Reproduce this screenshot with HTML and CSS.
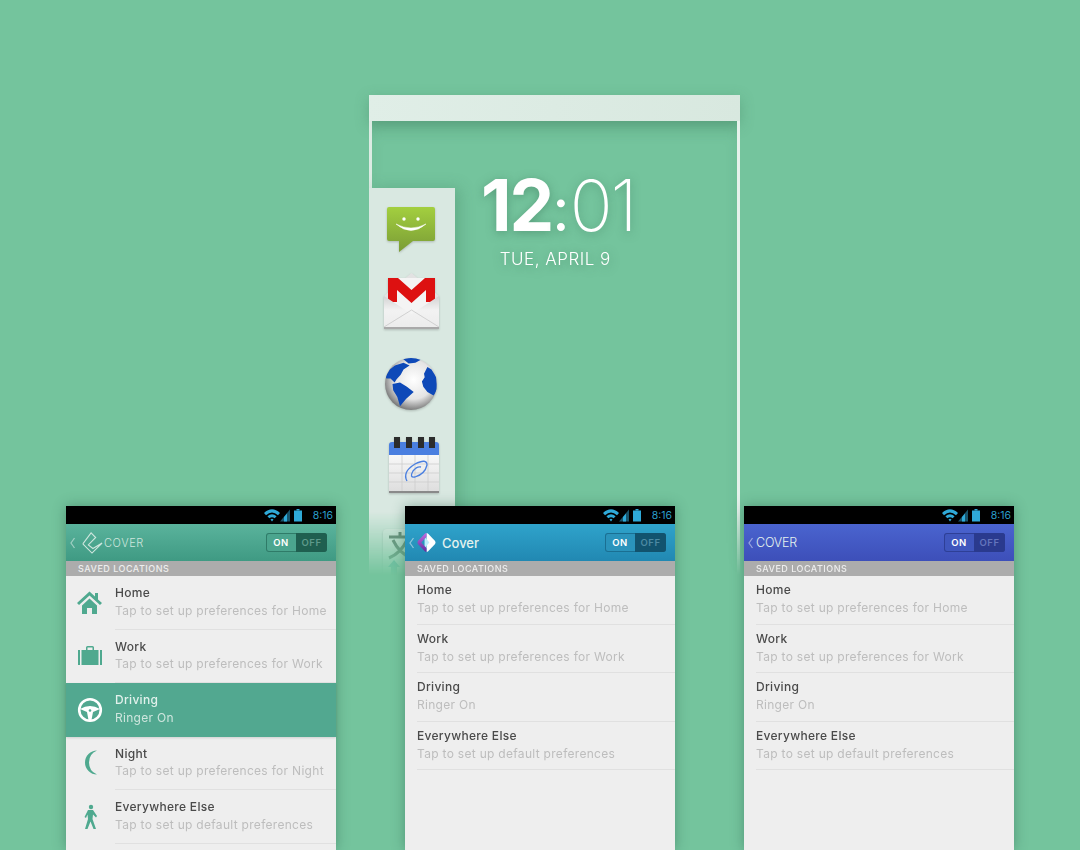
FILE: index.html
```html
<!DOCTYPE html>
<html lang="en">
<head>
  <meta charset="UTF-8">
  <title>Cover</title>
  <link rel="stylesheet" href="styles.css">
</head>
<body>

  <svg class="defs" width="0" height="0">
    <defs>
      <symbol id="status" viewBox="0 0 40 14">
        <path d="M0 5 Q8 -2.500 16 5 L14 7.200 Q8 2 2 7.200 Z M3.400 8.300 Q8 4 12.600 8.300 L10.700 10.300 Q8 8.200 5.300 10.300 Z M6.500 11.400 Q8 10.200 9.500 11.400 L8 13.400 Z" fill="#2fa9d8"/>
        <path d="M16 13.400 L26 1.500 V13.400 Z" fill="#2fa9d8" opacity=".5"/>
        <path d="M20 13.400 V9 L23 5.500 V13.400 Z" fill="#2fa9d8"/>
        <rect x="30" y="2.500" width="8" height="11" fill="#2fa9d8"/>
        <rect x="32.500" y="1" width="3" height="1.500" fill="#2fa9d8"/>
      </symbol>
      <symbol id="chevron" viewBox="0 0 8 12">
        <path d="M5.500 1 L2 6 L5.500 11" fill="none" stroke="#fff" stroke-width="1.300"/>
      </symbol>
    </defs>
  </svg>

  <div class="lock-frame">
    <div class="lock-top"></div>
    <div class="lock-body">
      <div class="app-drawer">
        <svg class="app-icon icon-msg" width="52" height="50" viewBox="0 0 52 50">
          <defs>
            <linearGradient id="msgGrad" x1="0" y1="0" x2="0" y2="1">
              <stop offset="0" stop-color="#a3cf3f"/>
              <stop offset="1" stop-color="#7a9c36"/>
            </linearGradient>
          </defs>
          <path d="M4 2 H48 Q50 2 50 4 V34 Q50 36 48 36 H28 L14 47 V36 H4 Q2 36 2 34 V4 Q2 2 4 2 Z" fill="url(#msgGrad)"/>
          <circle cx="19" cy="14" r="1.700" fill="#fff"/>
          <circle cx="33" cy="14" r="1.700" fill="#fff"/>
          <path d="M11 19 Q26 27 41 19 Q26 32 11 19 Z" fill="#fff" stroke="#fff" stroke-width=".5"/>
        </svg>
        <svg class="app-icon icon-gmail" width="59" height="58" viewBox="0 0 59 58">
          <defs>
            <linearGradient id="envGrad" x1="0" y1="0" x2="0" y2="1">
              <stop offset="0" stop-color="#d2d2d2"/>
              <stop offset=".45" stop-color="#f2f2f2"/>
              <stop offset="1" stop-color="#ececec"/>
            </linearGradient>
          </defs>
          <path d="M2 24 L29.500 1 L57 24 V55 H2 Z" fill="#e2e2e2"/>
          <rect x="6" y="6" width="47" height="36" fill="#f4f4f4"/>
          <path d="M6 6 H16 L29.500 18 L43 6 H53 V30 H44 V18 L29.500 31 L15 18 V30 H6 Z" fill="#dd1111"/>
          <path d="M2 24 L29.500 42 L57 24 V55 H2 Z" fill="url(#envGrad)"/>
          <path d="M2 55 L29.500 38 L57 55" fill="none" stroke="#c8c8c8" stroke-width=".8"/>
          <rect x="2" y="55" width="55" height="2" fill="#a9a9a9"/>
        </svg>
        <svg class="app-icon icon-globe" width="54" height="54" viewBox="0 0 54 54">
          <defs>
            <radialGradient id="globeGrad" cx=".55" cy=".42" r=".62">
              <stop offset="0" stop-color="#ffffff"/>
              <stop offset=".6" stop-color="#e4e4e4"/>
              <stop offset="1" stop-color="#6a6a6a"/>
            </radialGradient>
            <clipPath id="globeClip"><circle cx="27" cy="27" r="26"/></clipPath>
          </defs>
          <circle cx="27" cy="27" r="26" fill="url(#globeGrad)"/>
          <g fill="#0e49b8" clip-path="url(#globeClip)">
            <path d="M18.800 1.700 L29.700 .3 L37.300 2.400 L31.400 5.800 L24.600 6.500 Z"/>
            <path d="M1.700 19.500 L5.800 12.600 L10.900 8.500 L19.500 5.800 L25.600 8.500 L19.500 12.600 L16.700 17.800 L12.600 22.200 L10.600 25.600 L6.500 21.500 L2.400 21.500 Z"/>
            <path d="M8.500 27 L16 25.600 L22.900 29.700 L29.700 34.900 L22.200 41.700 L16 49.200 L13.300 40 L9.200 33.200 Z"/>
            <path d="M40 16.700 L43.400 9.900 L47.500 12.600 L52.300 20.200 L53 33.200 L49.600 38.600 L43.400 34.900 L39.300 29.700 L37.900 24.600 L40.700 20.200 Z"/>
          </g>
        </svg>
        <svg class="app-icon icon-calendar" width="54" height="58" viewBox="0 0 54 58">
          <defs>
            <linearGradient id="calGrad" x1="0" y1="0" x2="0" y2="1">
              <stop offset="0" stop-color="#f8f8f8"/>
              <stop offset="1" stop-color="#dedede"/>
            </linearGradient>
          </defs>
          <path d="M2 9 Q2 6 5 6 H49 Q52 6 52 9 V19 H2 Z" fill="#4a7fe0"/>
          <rect x="2" y="19" width="50" height="36" fill="url(#calGrad)"/>
          <path d="M2 28 H52 M2 37 H52 M2 46 H52 M15 19 V55 M28 19 V55 M41 19 V55" stroke="#cdcdcd" stroke-width=".8"/>
          <rect x="2" y="55" width="50" height="2" fill="#8a8a8a"/>
          <g fill="#2c2c2c">
            <rect x="7" y="1" width="6" height="11"/>
            <rect x="19" y="1" width="6" height="11"/>
            <rect x="31" y="1" width="6" height="11"/>
            <rect x="42" y="1" width="6" height="11"/>
          </g>
          <path d="M20 45 Q15 36 28 28 Q40 22 40 29 Q38 38 28 41 Q22 42 26 35 Q30 30 34 31" fill="none" stroke="#4a7fe0" stroke-width="1.300"/>
        </svg>
        <svg class="app-icon icon-translate" width="42" height="50" viewBox="0 0 42 50">
          <rect x="0" y="0" width="42" height="50" rx="4" fill="#e4ebe7"/>
          <path d="M6 8 H28 M17 3 V8 M10 11 Q16 24 28 29 M24 11 Q18 24 6 29" fill="none" stroke="#5f7468" stroke-width="3"/>
          <path d="M5 38 L11 31 L17 38 H14 V46 H8 V38 Z" fill="#5fb3b0"/>
        </svg>
      </div>
      <div class="clock">
        <div class="clock-time"><strong>12</strong><span class="clock-colon">:</span><span class="clock-min">01</span></div>
        <div class="clock-date">TUE, APRIL 9</div>
      </div>
    </div>
  </div>

  <div class="phone-row">

    <div class="phone">
      <div class="status-bar"><svg width="40" height="14"><use href="#status"/></svg><span>8:16</span></div>
      <div class="action-bar bar-green">
        <svg class="back" width="8" height="12"><use href="#chevron"/></svg>
        <svg class="cover-line" width="22" height="24" viewBox="0 0 24 26">
          <path d="M2 14 L11 2 L16 7 L8 15 L13 19 L23 13 M2 14 L12 24 L23 13" fill="none" stroke="#cfe6de" stroke-width="1.200"/>
        </svg>
        <span class="brand-caps brand-small">COVER</span>
        <div class="toggle"><span class="toggle-on">ON</span><span class="toggle-off">OFF</span></div>
      </div>
      <div class="section-label">SAVED LOCATIONS</div>
      <div class="list list-icons">
        <div class="row">
          <svg class="row-icon" width="26" height="26" viewBox="0 0 26 26"><path d="M0 13 L12.500 1.500 L18 6.500 V3 H21 V9.500 L25 13 L23 15 L12.500 5.500 L2 15 Z M5 15.500 L12.500 8.500 L20 15.500 V24 H15 V18 H10 V24 H5 Z" fill="#4fa98f"/></svg>
          <div class="row-text"><div class="row-title">Home</div><div class="row-sub">Tap to set up preferences for Home</div></div>
        </div>
        <div class="row">
          <svg class="row-icon" width="26" height="26" viewBox="0 0 26 26"><path d="M1 7 H3 V22 H1 Z M23 7 H25 V22 H23 Z M4.500 7 H9 V4.500 Q9 3 10.500 3 H15.500 Q17 3 17 4.500 V7 H21.500 V22 H4.500 Z M10.500 7 H15.500 V4.500 H10.500 Z" fill="#4fa98f" fill-rule="evenodd"/></svg>
          <div class="row-text"><div class="row-title">Work</div><div class="row-sub">Tap to set up preferences for Work</div></div>
        </div>
        <div class="row row-active">
          <svg class="row-icon" width="26" height="26" viewBox="0 0 26 26">
            <circle cx="13" cy="13" r="10.800" fill="none" stroke="#fff" stroke-width="2.600"/>
            <path d="M3 12 Q13 6 23 12 L16 15 L14.500 23 H11.500 L10 15 Z" fill="#fff"/>
            <circle cx="13" cy="13.500" r="1.300" fill="#52a890"/>
          </svg>
          <div class="row-text"><div class="row-title">Driving</div><div class="row-sub">Ringer On</div></div>
        </div>
        <div class="row">
          <svg class="row-icon" width="26" height="26" viewBox="0 0 26 26"><path d="M20 0.500 A12 12 0 1 0 20 24.500 A13 13 0 0 1 20 0.500 Z" fill="#4fa98f"/></svg>
          <div class="row-text"><div class="row-title">Night</div><div class="row-sub">Tap to set up preferences for Night</div></div>
        </div>
        <div class="row">
          <svg class="row-icon" width="26" height="26" viewBox="0 0 26 26"><circle cx="14" cy="3" r="2.200" fill="#4fa98f"/><path d="M11 6 H16 L20 12 L19 13.500 L16 10.500 L15.500 15 L19 25 H16.500 L13.500 17.500 L10.500 25 H8 L11 15 L10.500 10.500 L9 14 L7.500 13 Z" fill="#4fa98f"/></svg>
          <div class="row-text"><div class="row-title">Everywhere Else</div><div class="row-sub">Tap to set up default preferences</div></div>
        </div>
      </div>
    </div>

    <div class="phone">
      <div class="status-bar"><svg width="40" height="14"><use href="#status"/></svg><span>8:16</span></div>
      <div class="action-bar bar-blue">
        <svg class="back" width="8" height="12"><use href="#chevron"/></svg>
        <svg class="cover-logo" width="21" height="21" viewBox="0 0 22 22">
          <defs>
            <linearGradient id="logoGrad" x1="0" y1="0" x2="0" y2="1">
              <stop offset="0" stop-color="#c56be0"/>
              <stop offset="1" stop-color="#5f2e9e"/>
            </linearGradient>
          </defs>
          <path d="M11 1 Q12 1 13 2 L20 9.500 Q21 11 20 12.500 L13 20 Q12 21 11 21 Z" fill="#fff"/>
          <path d="M9 5 L14 11 L9 17 Z" fill="#bfeefa"/>
          <path d="M11 1 Q10 1 9 2 L2 9.500 Q1 11 2 12.500 L9 20 Q10 21 11 21 V17 L5.500 11 L11 5 Z" fill="url(#logoGrad)"/>
        </svg>
        <span class="brand-word">Cover</span>
        <div class="toggle toggle-blue"><span class="toggle-on">ON</span><span class="toggle-off">OFF</span></div>
      </div>
      <div class="section-label">SAVED LOCATIONS</div>
      <div class="list">
        <div class="row"><div class="row-text"><div class="row-title">Home</div><div class="row-sub">Tap to set up preferences for Home</div></div></div>
        <div class="row"><div class="row-text"><div class="row-title">Work</div><div class="row-sub">Tap to set up preferences for Work</div></div></div>
        <div class="row"><div class="row-text"><div class="row-title">Driving</div><div class="row-sub">Ringer On</div></div></div>
        <div class="row"><div class="row-text"><div class="row-title">Everywhere Else</div><div class="row-sub">Tap to set up default preferences</div></div></div>
      </div>
    </div>

    <div class="phone">
      <div class="status-bar"><svg width="40" height="14"><use href="#status"/></svg><span>8:16</span></div>
      <div class="action-bar bar-indigo">
        <svg class="back" width="8" height="12"><use href="#chevron"/></svg>
        <span class="brand-caps">COVER</span>
        <div class="toggle toggle-indigo"><span class="toggle-on">ON</span><span class="toggle-off">OFF</span></div>
      </div>
      <div class="section-label">SAVED LOCATIONS</div>
      <div class="list">
        <div class="row"><div class="row-text"><div class="row-title">Home</div><div class="row-sub">Tap to set up preferences for Home</div></div></div>
        <div class="row"><div class="row-text"><div class="row-title">Work</div><div class="row-sub">Tap to set up preferences for Work</div></div></div>
        <div class="row"><div class="row-text"><div class="row-title">Driving</div><div class="row-sub">Ringer On</div></div></div>
        <div class="row"><div class="row-text"><div class="row-title">Everywhere Else</div><div class="row-sub">Tap to set up default preferences</div></div></div>
      </div>
    </div>

  </div>

</body>
</html>
```

FILE: styles.css
```css
body {
  margin: 0;
  width: 1080px;
  height: 850px;
  overflow: hidden;
  position: relative;
  background-color: #74c49d;
  font-family: Inter, Lato, sans-serif;
}

.defs {
  position: absolute;
}

/* big lock screen in the middle */
.lock-frame {
  width: 371px;
  height: 480px;
  padding: 95px 0 0 369px;
  display: flex;
  flex-direction: column;
}

.lock-top {
  height: 26px;
  flex: none;
  background: linear-gradient(100deg, #e0eee7, #d8e8df);
  box-shadow: 0 4px 14px rgba(60, 120, 90, 0.35);
}

.lock-body {
  flex: 1;
  display: flex;
  align-items: flex-start;
  border-left: 3px solid #dcebe3;
  border-right: 3px solid #e6f2ec;
  box-shadow: inset 0 12px 18px -8px rgba(60, 120, 90, 0.3);
  -webkit-mask-image: linear-gradient(to bottom, #000 86%, transparent 100%);
  mask-image: linear-gradient(to bottom, #000 86%, transparent 100%);
}

.app-drawer {
  width: 86px;
  height: 387px;
  flex: none;
  margin-top: 67px;
  margin-left: -3px;
  display: flex;
  flex-direction: column;
  align-items: flex-start;
  background-color: #d9e8e1;
  box-shadow: 5px 0 14px rgba(60, 120, 90, 0.3);
  overflow: hidden;
}

.app-icon {
  flex: none;
  filter: drop-shadow(0 1px 1px rgba(0, 0, 0, 0.2));
}

.icon-msg {
  margin: 17px 0 0 16px;
}

.icon-gmail {
  margin: 17px 0 0 13px;
}

.icon-globe {
  margin: 27px 0 0 15px;
}

.icon-calendar {
  margin: 25px 0 0 18px;
}

.icon-translate {
  margin: 35px 0 0 14px;
}

.clock {
  margin-top: 43px;
  margin-left: 26px;
  color: white;
  text-align: center;
  text-shadow: 0 2px 10px rgba(60, 120, 90, 0.5);
}

.clock-time {
  font-size: 71px;
  font-weight: 200;
  line-height: 82px;
}

.clock-time strong {
  font-weight: 700;
  letter-spacing: -2px;
}

.clock-colon {
  font-size: 60px;
  font-weight: 400;
}

.clock-min {
  letter-spacing: -2px;
}

.clock-date {
  font-size: 17px;
  font-weight: 300;
  margin: -1px 6px 0 0;
  letter-spacing: 0.5px;
}

/* three phones */
.phone-row {
  position: absolute;
  top: 506px;
  left: 66px;
  display: flex;
  gap: 69px;
}

.phone {
  width: 270px;
  height: 344px;
  background-color: #eeeeee;
  box-shadow: 0 0 12px rgba(40, 90, 70, 0.45);
  filter: blur(0.35px);
}

.status-bar {
  height: 18px;
  background-color: black;
  color: #2b9fcb;
  display: flex;
  justify-content: flex-end;
  align-items: center;
  gap: 9px;
  padding-right: 3px;
  font-size: 10.5px;
}

.action-bar {
  height: 37px;
  display: flex;
  align-items: center;
  color: #e4f2ee;
  padding: 0 9px 0 3px;
  box-sizing: border-box;
}

.bar-green {
  background: linear-gradient(#5ab39c, #3f9a83);
}

.bar-blue {
  background: linear-gradient(#2fa3cb, #2188b2);
}

.bar-indigo {
  background: linear-gradient(#4a64cf, #3d4fb9);
}

.back {
  flex: none;
  opacity: 0.45;
}

.cover-line {
  margin-left: 4px;
  margin-right: 1px;
}

.cover-logo {
  margin-right: 5px;
}

.brand-caps {
  font-size: 12.5px;
  font-weight: 300;
  letter-spacing: -0.2px;
  margin-left: 1px;
}

.brand-small {
  font-size: 11px;
  letter-spacing: 0.6px;
  margin-left: 0;
  color: #cfe6de;
}

.brand-word {
  font-size: 13px;
  font-weight: 500;
}

.toggle {
  margin-left: auto;
  width: 61px;
  height: 19px;
  display: flex;
  font-size: 9.5px;
  font-weight: 600;
  border-radius: 3px;
  overflow: hidden;
  background-color: #4ba58e;
  box-shadow: inset 0 0 0 1px #2f7b68;
}

.toggle span {
  display: flex;
  align-items: center;
  justify-content: center;
  letter-spacing: 0.5px;
}

.toggle-on {
  width: 30px;
  color: white;
}

.toggle-off {
  flex: 1;
  color: #5e9a8b;
  background-color: #1f5f50;
}

.toggle-blue {
  background-color: #2a93bb;
  box-shadow: inset 0 0 0 1px #1a6f92;
}

.toggle-blue .toggle-off {
  background-color: #12536e;
  color: #4d8aa3;
}

.toggle-indigo {
  background-color: #3f56bd;
  box-shadow: inset 0 0 0 1px #2e3f96;
}

.toggle-indigo .toggle-off {
  background-color: #2a3a8e;
  color: #6475bd;
}

.section-label {
  height: 15px;
  background-color: #acacac;
  color: #eeeeee;
  font-size: 9px;
  font-weight: 500;
  line-height: 15px;
  padding-left: 12px;
  letter-spacing: 0.5px;
}

.row {
  height: 48.5px;
  display: flex;
  align-items: center;
  box-sizing: border-box;
  padding-left: 12px;
}

.row-text {
  flex: 1;
  height: 100%;
  box-sizing: border-box;
  padding-top: 6px;
  border-bottom: 1px solid #e0e0e0;
}

.row-title {
  font-size: 12px;
  font-weight: 500;
  color: #4a4a4a;
  line-height: 15px;
  letter-spacing: 0.3px;
}

.row-sub {
  font-size: 12px;
  color: #bdbdbd;
  line-height: 15px;
  margin-top: 3px;
  letter-spacing: 0.3px;
}

.list-icons .row {
  height: 53.5px;
  padding-left: 11px;
}

.list-icons .row-icon {
  margin-right: 12px;
  flex: none;
}

.list-icons .row-text {
  padding-top: 9px;
}

.list-icons .row-sub {
  margin-top: 2.5px;
}

.row-active {
  background-color: #52a890;
  box-shadow: 0 1px 2px rgba(0, 0, 0, 0.12);
}

.row-active .row-title {
  color: #e2f1ec;
}

.row-active .row-sub {
  color: #cfe6de;
}

.row-active .row-text {
  border-bottom: none;
}
```
